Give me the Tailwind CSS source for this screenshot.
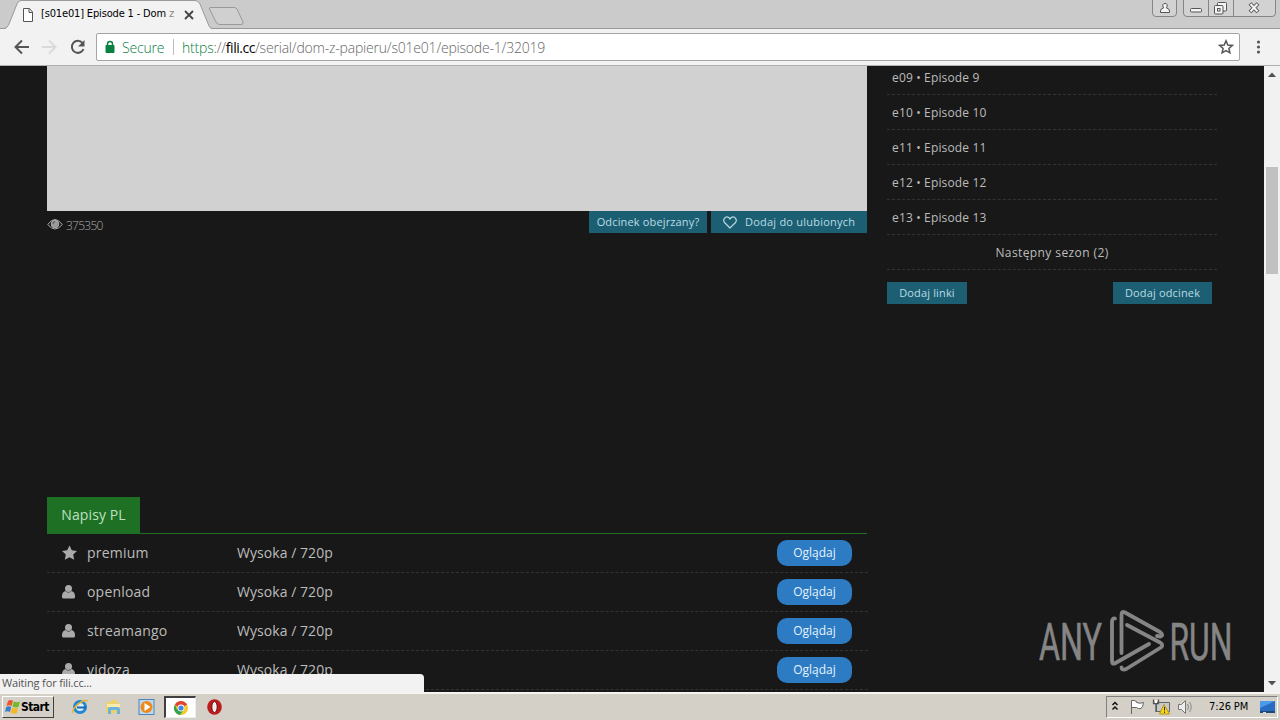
<!DOCTYPE html>
<html lang="pl">

<head>
    <meta charset="UTF-8">
    <meta name="viewport" content="width=device-width, initial-scale=1.0">
    <title>[s01e01] Episode 1 - Dom z papieru</title>
    <script src="https://cdn.jsdelivr.net/npm/@tailwindcss/browser@4"></script>
</head>

<body class="w-[1280px] h-[720px] overflow-hidden flex flex-col bg-[#181818] font-['Open_Sans','Noto_Sans',sans-serif]">

    <!-- Tab strip -->
    <header class="relative h-[29px] shrink-0 bg-[#cbcbcb]">
        <svg class="absolute inset-0" width="1280" height="29" fill="none">
            <path d="M0 28.5H1280" stroke="#999" />
            <path d="M0 29H5C7 28 8 26 9 24L17 4Q18.500 .5 21 .5H195Q198 .5 200 4L209 26Q210 29 213 29Z" fill="#f2f2f2" />
            <path d="M0 28.500H4C7 28 8 26 9 24L17 4Q18.500 .5 21 .5H195Q198 .5 200 4L209 26Q210 28.500 213 28.500" stroke="#999" />
            <path d="M211 7.500H234Q236 7.500 237 9L243 22Q243.500 24.500 241 24.500H220Q217 24.500 216 22L209.500 9Q209 7.500 211 7.500Z" fill="#d0d0d0" stroke="#999" />
            <path d="M23.500 8.500H29.500L32.500 12V21.500H23.500ZM29 8.500V12.500H32.500" fill="#fff" stroke="#555" />
            <path d="M185 11L193 19M193 11L185 19" stroke="#444" stroke-width="1.8" />
            <g fill="#d2d2d2" stroke="#858585">
                <path d="M1152.500 0V13Q1152.500 16.500 1156 16.500H1173Q1176.500 16.500 1176.500 13V0" />
                <path d="M1183.500 0V13Q1183.500 16.500 1187 16.500H1272Q1275.500 16.500 1275.500 13V0M1208.500 0V16M1233.500 0V16" />
            </g>
            <g fill="#f4f4f4" stroke="#555">
                <path d="M1160.500 12.500V11Q1160.500 8.500 1163.500 8Q1161.500 3.500 1165 3.500Q1168.500 3.500 1166.500 8Q1169.500 8.500 1169.500 11V12.500Z" />
                <rect x="1190.500" y="8.500" width="11" height="3.500" rx="1" />
                <rect x="1217.500" y="2.500" width="9" height="8.500" rx="1" />
                <rect x="1214.500" y="5.500" width="8.500" height="8.500" rx="1" />
                <rect x="1217.500" y="8.500" width="2.500" height="2.500" />
            </g>
            <path d="M1250 3.500L1258 12M1258 3.500L1250 12" stroke="#555" stroke-width="4" />
            <path d="M1250.500 4L1257.500 11.500M1257.500 4L1250.500 11.500" stroke="#f4f4f4" stroke-width="2" />
        </svg>
        <div class="absolute left-[41px] top-[6px] w-[136px] whitespace-nowrap text-[11px] leading-4 tracking-[-0.16px] text-black font-['DejaVu_Sans_Condensed','DejaVu_Sans',sans-serif] font-stretch-condensed">[s01e01] Episode 1 - Dom <span class="text-[#888]">z</span></div>
    </header>

    <!-- Toolbar -->
    <div class="h-[37px] shrink-0 flex items-center bg-[#f2f2f2] border-b border-[#b0b0b0]">
        <svg class="shrink-0" width="96" height="36" fill="none" stroke="#555" stroke-width="2">
            <path d="M29 18H16M22 11.500L15.500 18L22 24.500" />
            <path d="M42 18H55M49 11.500L55.500 18L49 24.500" stroke="#dadada" />
            <path d="M82.500 14A6 6 0 1 0 83.500 20" />
            <path d="M84.500 11V17.500H78Z" fill="#555" stroke="none" />
        </svg>
        <div class="w-[1144px] h-7 shrink-0 flex items-center bg-white border border-[#a5a5a5] rounded-[2px] text-[14px] whitespace-nowrap">
            <svg class="ml-2 shrink-0" width="10" height="14" fill="none">
                <path d="M2.500 6V4Q2.500 1.500 5 1.500Q7.500 1.500 7.500 4V6" stroke="#0b8043" stroke-width="1.500" />
                <rect x=".5" y="5" width="9" height="8" rx="1" fill="#0b8043" />
            </svg>
            <span class="ml-[7px] w-[44px] text-[#0b8043] tracking-[-0.2px] font-light">Secure</span>
            <span class="ml-[7px] w-px h-4 bg-[#bbb]"></span>
            <span class="ml-2 text-[#666] font-light tracking-[-0.2px]"><span class="text-[#0b8043]">https</span>://<span class="text-black font-normal tracking-[-0.45px]">fili.cc</span>/serial/dom-z-papieru/s01e01/episode-1/32019</span>
            <svg class="ml-auto mr-[5px]" width="16" height="16" fill="none" stroke="#555" stroke-width="1.500">
                <path d="M8 1.800L9.800 6L14.300 6.400L10.900 9.400L11.900 13.800L8 11.500L4.100 13.800L5.100 9.400L1.700 6.400L6.200 6Z" />
            </svg>
        </div>
        <svg class="ml-[13px]" width="12" height="16" fill="#555">
            <circle cx="5.500" cy="3" r="1.600" />
            <circle cx="5.500" cy="8" r="1.600" />
            <circle cx="5.500" cy="13" r="1.600" />
        </svg>
    </div>

    <!-- Page -->
    <div class="relative h-[626px] shrink-0 flex overflow-hidden bg-[#181818] text-[#bcbcbc]">
        <main class="ml-[47px] w-[820px] shrink-0">
            <div class="h-[145px] bg-[#d1d1d1]"></div>
            <div class="h-[22px] flex gap-1">
                <div class="flex items-center gap-[3px] pt-[7px] text-[12px] font-light tracking-[-0.75px] text-[#aaa]">
                    <svg class="-mt-[2px]" width="16" height="13" fill="none" stroke="#aaa">
                        <path d="M.7 6.500Q8-3.500 15.300 6.500Q8 15.500 .7 6.500Z" />
                        <circle cx="8" cy="6" r="3.800" fill="#999" />
                        <path d="M6 5.500Q6 4 7.800 3.800" stroke="#333" />
                    </svg>
                    <span>375350</span>
                </div>
                <button class="ml-auto w-[118px] bg-[#1d5f72] text-[#b9dce5] text-[11px] leading-[22px] tracking-[0.15px] whitespace-nowrap">Odcinek obejrzany?</button>
                <button class="w-[156px] flex items-center pl-3 bg-[#1d5f72] text-[#b9dce5] text-[11px] leading-[22px] tracking-[0.22px] whitespace-nowrap">
                    <svg class="mr-2" width="14" height="13" fill="none" stroke="#b9dce5" stroke-width="1.200">
                        <path d="M7 12L1.700 6.800C-.8 3.800 2.500-.8 6 1.800L7 3L8 1.800C11.500-.8 14.800 3.800 12.300 6.800Z" />
                    </svg>
                    Dodaj do ulubionych
                </button>
            </div>

            <div class="mt-[264px] flex border-b border-[#1e7024]">
                <div class="w-[93px] h-9 bg-[#1e7024] text-center text-[14px] leading-9 tracking-[0.1px] text-[#bfe0c0]">Napisy PL</div>
            </div>
            <div id="links" class="w-[821px]"></div>
        </main>

        <aside class="ml-5 w-[330px] shrink-0">
            <ul id="episodes" class="-mt-1.5 text-[12px] leading-[36px]"></ul>
            <div class="mt-3 flex justify-between w-[325px] text-[11px] leading-[22px] text-[#b9dce5] tracking-[0.15px]">
                <button class="w-20 bg-[#1d5f72]">Dodaj linki</button>
                <button class="w-[99px] bg-[#1d5f72]">Dodaj odcinek</button>
            </div>
        </aside>

        <!-- Scrollbar -->
        <div class="ml-auto w-4 h-full flex flex-col items-center bg-[#f1f1f1]">
            <svg width="16" height="17"><path d="M4 11L8 6.500L12 11Z" fill="#505050" /></svg>
            <div class="mt-[84px] w-3 h-[107px] bg-[#c1c1c1]"></div>
            <svg class="mt-auto" width="16" height="17"><path d="M4 6L8 10.500L12 6Z" fill="#505050" /></svg>
        </div>

        <!-- Watermark -->
        <svg class="absolute left-[1036px] top-[540px] text-[51px] font-['Roboto',sans-serif]" width="215" height="75" fill="#858585">
            <g stroke="#858585" stroke-width=".6">
                <text x="3" y="53.500" textLength="63" lengthAdjust="spacingAndGlyphs">ANY</text>
                <text x="133.500" y="53.500" textLength="63" lengthAdjust="spacingAndGlyphs">RUN</text>
            </g>
            <g fill="none" stroke="#858585" stroke-width="3.800" stroke-linecap="round" stroke-linejoin="round">
                <path d="M79 12.500Q76 12 76 16V55Q76 59 79.500 57L113 38" />
                <path d="M85.500 47V9Q85.500 4.500 89 6.500L124 26Q128 29 124.500 30.500L121 30" />
                <path d="M91 19L124 36.500Q128.500 39 124 42L91 62.500Q86 65 85.500 61.500" />
            </g>
        </svg>

        <!-- Status bubble -->
        <div class="absolute left-0 bottom-0 w-[424px] h-[18px] pl-[2px] bg-[#f2f2f2] rounded-tr text-[11px] leading-[18px] text-[#555] tracking-[-0.15px]">Waiting for fili.cc...</div>
    </div>

    <!-- Taskbar -->
    <footer class="h-7 shrink-0 flex items-center bg-[#d4d0c8] border-t-2 border-[#f5f4f1] pt-[1px] pb-[1px] text-[11px] text-black font-['DejaVu_Sans_Condensed','DejaVu_Sans',sans-serif] font-stretch-condensed">
        <button class="ml-[2px] w-[52px] h-[22px] flex items-center pl-[2px] bg-[#d4d0c8] border border-t-white border-l-white border-b-[#404040] border-r-[#404040] text-[12px] font-bold tracking-[-0.6px]">
            <svg class="mr-[1px] shrink-0" width="15" height="16">
                <path d="M3 2Q6 0 8 2L6.500 7Q4 5.500 1.500 7Z" fill="#e8582a" />
                <path d="M8.800 2.500Q12 4 15 2.500L13.500 8Q10.500 9 7.500 7.500Z" fill="#76b82a" />
                <path d="M1.200 8Q4 6.500 6.200 8L5 13Q2.500 11.500 0 13Z" fill="#3a7ed0" />
                <path d="M7 8.500Q10 10 13 9L11.800 14Q8.500 15.500 5.800 13.500Z" fill="#f5b820" />
            </svg>
            Start
        </button>
        <svg class="ml-[18px]" width="17" height="18" fill="none">
            <circle cx="8" cy="9" r="5.500" fill="#d7f0fb" stroke="#2485d0" stroke-width="3" />
            <path d="M5 9.500H14" stroke="#1768b5" stroke-width="2" />
            <path d="M1 15C-1 11 11 0 16 3" stroke="#e9b52c" stroke-width="1.500" />
        </svg>
        <svg class="ml-[16px]" width="17" height="18">
            <path d="M1 4H6L7 2H12V5H15V15H1Z" fill="#edd26b" />
            <path d="M2 6H15V9H2Z" fill="#f9ebad" />
            <path d="M3 16V11Q3 9 5 9H12Q15 9 15 12V16H12V12H6V16Z" fill="#67b5df" />
        </svg>
        <svg class="ml-[16px]" width="17" height="18">
            <rect x="1" y="1.500" width="15" height="15" fill="#bcd9ef" stroke="#4b87be" />
            <circle cx="8.500" cy="9" r="6" fill="#ee8a1d" />
            <path d="M6.500 5L12.500 9L6.500 13Z" fill="#fff" />
        </svg>
        <div class="ml-[9px] w-8 h-[22px] flex items-center justify-center bg-white border-t-2 border-l-2 border-[#404040] border-b border-r border-b-[#eee] border-r-[#eee]">
            <svg width="16" height="16" viewBox="0 0 16 16">
                <circle cx="8" cy="8" r="7" fill="#f6c927" />
                <path d="M8 8L1.940 4.500A7 7 0 0 1 14.060 4.500Z" fill="#df4535" />
                <path d="M8 8L4 9.500L1.940 4.500A7 7 0 0 0 7 15L10 11Z" fill="#34a351" />
                <path d="M2 4.500H14L11 6L8 5L5 7Z" fill="#df4535" />
                <circle cx="8" cy="8" r="3.400" fill="#fff" />
                <circle cx="8" cy="8" r="2.600" fill="#4285e8" />
            </svg>
        </div>
        <svg class="ml-[10px]" width="17" height="18">
            <ellipse cx="8.500" cy="9" rx="7.300" ry="7.700" fill="#bd1c1c" />
            <ellipse cx="8.500" cy="9" rx="2.700" ry="5.500" fill="#f5eeee" stroke="#6d0707" />
        </svg>

        <!-- Tray -->
        <div class="ml-auto mr-[2px] w-[172px] h-[22px] flex items-center border border-t-[#808080] border-l-[#808080] border-b-white border-r-white">
            <svg class="shrink-0" width="102" height="20" fill="none">
                <path d="M5.500 8L8 5.500L10.500 8M5.500 12.500L8 10L10.500 12.500" stroke="#111" stroke-width="1.500" />
                <path d="M24.500 17V3.500M24.500 3.500Q27 3 29.500 4.500V5.500Q33 7 36.500 5.500Q36 10 34 11.500Q31 12 29.500 10.500H24.500" fill="#fff" stroke="#666" />
                <path d="M49.500 5.500H62.500V14.500H49.500Z" fill="#c9c9c9" stroke="#666" />
                <path d="M46.500 2.500V6.500H51.500V2.500M49 6.500V15" stroke="#555" stroke-width="1.300" />
                <path d="M48 3H50V6H48Z" fill="#fff" />
                <path d="M57 7.500L62.500 17H52.500Z" fill="#f8d51d" stroke="#b89410" />
                <path d="M57.500 10V13.500M57.500 14.500V16" stroke="#333" />
                <path d="M71.500 7.500H74.500L78.500 3.500V16.500L74.500 12.500H71.500Z" fill="#eee" stroke="#777" />
                <path d="M80.500 7Q82.500 10 80.500 13M82.500 5Q86 10 82.500 15" stroke="#888" />
            </svg>
            <span class="w-[40px] whitespace-nowrap tracking-[-0.1px]">7:26 PM</span>
            <svg class="ml-[10px] shrink-0" width="17" height="16">
                <path d="M1 2H16V13H1Z" fill="#286bc2" />
                <path d="M1 2H16L1 9Z" fill="#4c9ae8" />
                <path d="M1 12H16V14H1Z" fill="#224878" />
                <path d="M4 13H7V14H4Z" fill="#ddd" />
            </svg>
        </div>
    </footer>

    <script>
        const episodes = ['e09 • Episode 9', 'e10 • Episode 10', 'e11 • Episode 11', 'e12 • Episode 12', 'e13 • Episode 13'];
        const hosts = ['premium', 'openload', 'streamango', 'vidoza'];

        const star = '<path d="M7.500 .5L9.800 5.200L15 5.900L11.200 9.500L12.200 14.700L7.500 12.200L2.800 14.700L3.800 9.500L0 5.900L5.200 5.200Z" />';
        const user = '<circle cx="6.500" cy="4.500" r="3.500" /><path d="M3.500 7Q6.500 10 9.500 7Q13 8 13 12V13Q13 14.500 11.500 14.500H1.500Q0 14.500 0 13V12Q0 8 3.500 7Z" />';

        document.getElementById('episodes').innerHTML = episodes.map(title => `
            <li class="h-[35px] pl-[5px] border-b border-dashed border-[#333] tracking-[0.15px]">${title}</li>
        `).join('') + `
            <li class="h-[35px] text-center border-b border-dashed border-[#333] tracking-[0.4px]">Następny sezon (2)</li>
        `;

        document.getElementById('links').innerHTML = hosts.map((host, i) => `
            <div class="h-[39px] flex items-center pl-[15px] pr-4 border-b border-dashed border-[#333] text-[14px] text-[#bcbcbc]">
                <svg class="mr-[9px]" width="16" height="16" fill="#aaa">${i === 0 ? star : user}</svg>
                <span class="w-[150px] pb-[2px] tracking-[0.2px]">${host}</span>
                <span class="pb-[2px] tracking-[0.05px]">Wysoka / 720p</span>
                <button class="ml-auto w-[75px] h-[26px] rounded-[10px] bg-[#2d7bc2] text-[12px] text-[#e5f3ff]">Oglądaj</button>
            </div>
        `).join('');
    </script>
</body>

</html>
